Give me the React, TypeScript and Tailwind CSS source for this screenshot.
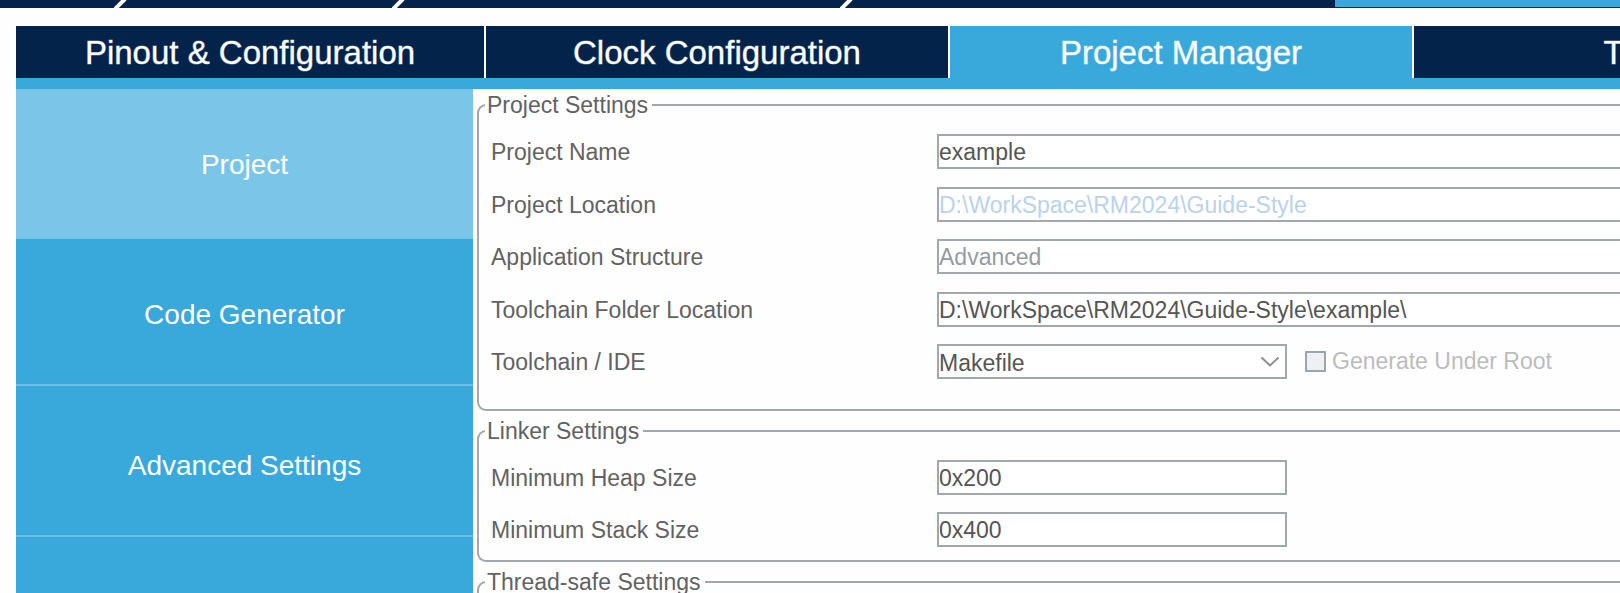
import type { ReactNode } from "react";

const tabs = [
  { label: "Pinout & Configuration", active: false },
  { label: "Clock Configuration", active: false },
  { label: "Project Manager", active: true },
  { label: "Tools", active: false },
];

const fieldBase = "h-[35px] border-2 border-[#a0a7ad] bg-white text-[23px] outline-none";
const wideField = `${fieldBase} min-w-0 flex-1 border-r-0 pt-0.5`;
const shortField = `${fieldBase} w-[350px] pt-0.5`;

function Chevron({ className }: { className: string }) {
  return (
    <svg className={className} viewBox="0 0 120 8" preserveAspectRatio="none" aria-hidden="true">
      <path d="M1 9L11 -1" stroke="#fff" strokeWidth="4" fill="none" />
    </svg>
  );
}

function TopBar() {
  return (
    <header className="flex h-2 shrink-0 overflow-hidden bg-[#03234b]">
      <div className="w-[114px] shrink-0" />
      <Chevron className="h-2 w-[120px] shrink-0" />
      <div className="w-[158px] shrink-0" />
      <Chevron className="h-2 w-[120px] shrink-0" />
      <div className="w-[328px] shrink-0" />
      <Chevron className="h-2 w-[120px] shrink-0" />
      <div className="w-[375px] shrink-0" />
      <div className="h-[7px] flex-1 bg-[#39a9dc]" />
    </header>
  );
}

function Group({ title, className, children }: { title: string; className?: string; children?: ReactNode }) {
  return (
    <fieldset className="min-w-0 rounded-l-[9px] border-2 border-r-0 border-[#a0a7ad]">
      <legend className="ml-1.5 pr-1 pl-0.5 text-[23px] leading-[26px]">{title}</legend>
      <div className={`flex flex-col justify-between pt-4 pl-3 ${className ?? ""}`}>{children}</div>
    </fieldset>
  );
}

function Row({ id, label, children }: { id: string; label: string; children: ReactNode }) {
  return (
    <div className="flex h-[35px] items-center">
      <label htmlFor={id} className="w-[446px] shrink-0 pt-0.5">
        {label}
      </label>
      {children}
    </div>
  );
}

export default function App() {
  return (
    <div className="flex h-screen flex-col overflow-hidden bg-[#fefefe] font-['Liberation_Sans',Arial,sans-serif] text-[23px] text-[#626262]">
      <TopBar />
      <div className="mt-[18px] ml-4 flex min-h-0 flex-1 flex-col">
        <nav className="flex h-[63px] shrink-0 overflow-hidden border-b-[11px] border-[#39a9dc]">
          {tabs.map((tab) => (
            <button
              key={tab.label}
              type="button"
              className={`w-[464px] shrink-0 border-r-2 border-white text-[33px] leading-none text-white first:w-[470px] last:w-[458px] [-webkit-text-stroke:1px_rgb(255_255_255/0.4)] ${
                tab.active ? "bg-[#39a9dc]" : "bg-[#03234b]"
              }`}
            >
              {tab.label}
            </button>
          ))}
        </nav>
        <div className="flex min-h-0 flex-1">
          <aside className="flex w-[457px] shrink-0 flex-col overflow-hidden bg-[#39a9dc] text-[28px] text-white">
            <button type="button" className="h-[150px] shrink-0 bg-[#7bc5e9] pt-0.5">
              Project
            </button>
            <button type="button" className="h-[147px] shrink-0 border-b-2 border-[#6bbfe6] pt-1.5">
              Code Generator
            </button>
            <button type="button" className="h-[151px] shrink-0 border-b-2 border-[#6bbfe6] pt-2.5">
              Advanced Settings
            </button>
          </aside>
          <main className="flex min-w-0 flex-1 flex-col gap-[7px] overflow-hidden pt-[3px] pl-1">
            <Group title="Project Settings" className="h-[291px] pb-[30px]">
              <Row id="name" label="Project Name">
                <input id="name" className={`${wideField} text-[#555]`} defaultValue="example" />
              </Row>
              <Row id="location" label="Project Location">
                <input id="location" readOnly className={`${wideField} text-[#bad2ea]`} defaultValue="D:\WorkSpace\RM2024\Guide-Style" />
              </Row>
              <Row id="structure" label="Application Structure">
                <input id="structure" readOnly className={`${wideField} text-[#939ba3]`} defaultValue="Advanced" />
              </Row>
              <Row id="folder" label="Toolchain Folder Location">
                <input id="folder" className={`${wideField} text-[#555]`} defaultValue="D:\WorkSpace\RM2024\Guide-Style\example\" />
              </Row>
              <Row id="ide" label="Toolchain / IDE">
                <div className="grid w-[350px] shrink-0 items-center">
                  <select id="ide" className={`${fieldBase} col-start-1 row-start-1 w-full appearance-none text-[#555]`}>
                    <option>Makefile</option>
                  </select>
                  <svg
                    className="pointer-events-none col-start-1 row-start-1 mr-[7px] h-[11px] w-5 justify-self-end"
                    viewBox="0 0 20 11"
                    fill="none"
                    stroke="#8e8e8e"
                    strokeWidth="2"
                    aria-hidden="true"
                  >
                    <path d="M1.5 1.5L10 9.5L18.5 1.5" />
                  </svg>
                </div>
                <input
                  id="root-option"
                  type="checkbox"
                  disabled
                  className="ml-[18px] size-[21px] shrink-0 appearance-none border-2 border-[#9ca5ad] bg-[#eef0f3]"
                />
                <label htmlFor="root-option" className="ml-1.5 whitespace-nowrap text-[#bcbcbc]">
                  Generate Under Root
                </label>
              </Row>
            </Group>
            <Group title="Linker Settings" className="h-[116px] pb-[13px]">
              <Row id="heap" label="Minimum Heap Size">
                <input id="heap" className={`${shortField} text-[#555]`} defaultValue="0x200" />
              </Row>
              <Row id="stack" label="Minimum Stack Size">
                <input id="stack" className={`${shortField} text-[#555]`} defaultValue="0x400" />
              </Row>
            </Group>
            <Group title="Thread-safe Settings" className="h-24" />
          </main>
        </div>
      </div>
    </div>
  );
}
